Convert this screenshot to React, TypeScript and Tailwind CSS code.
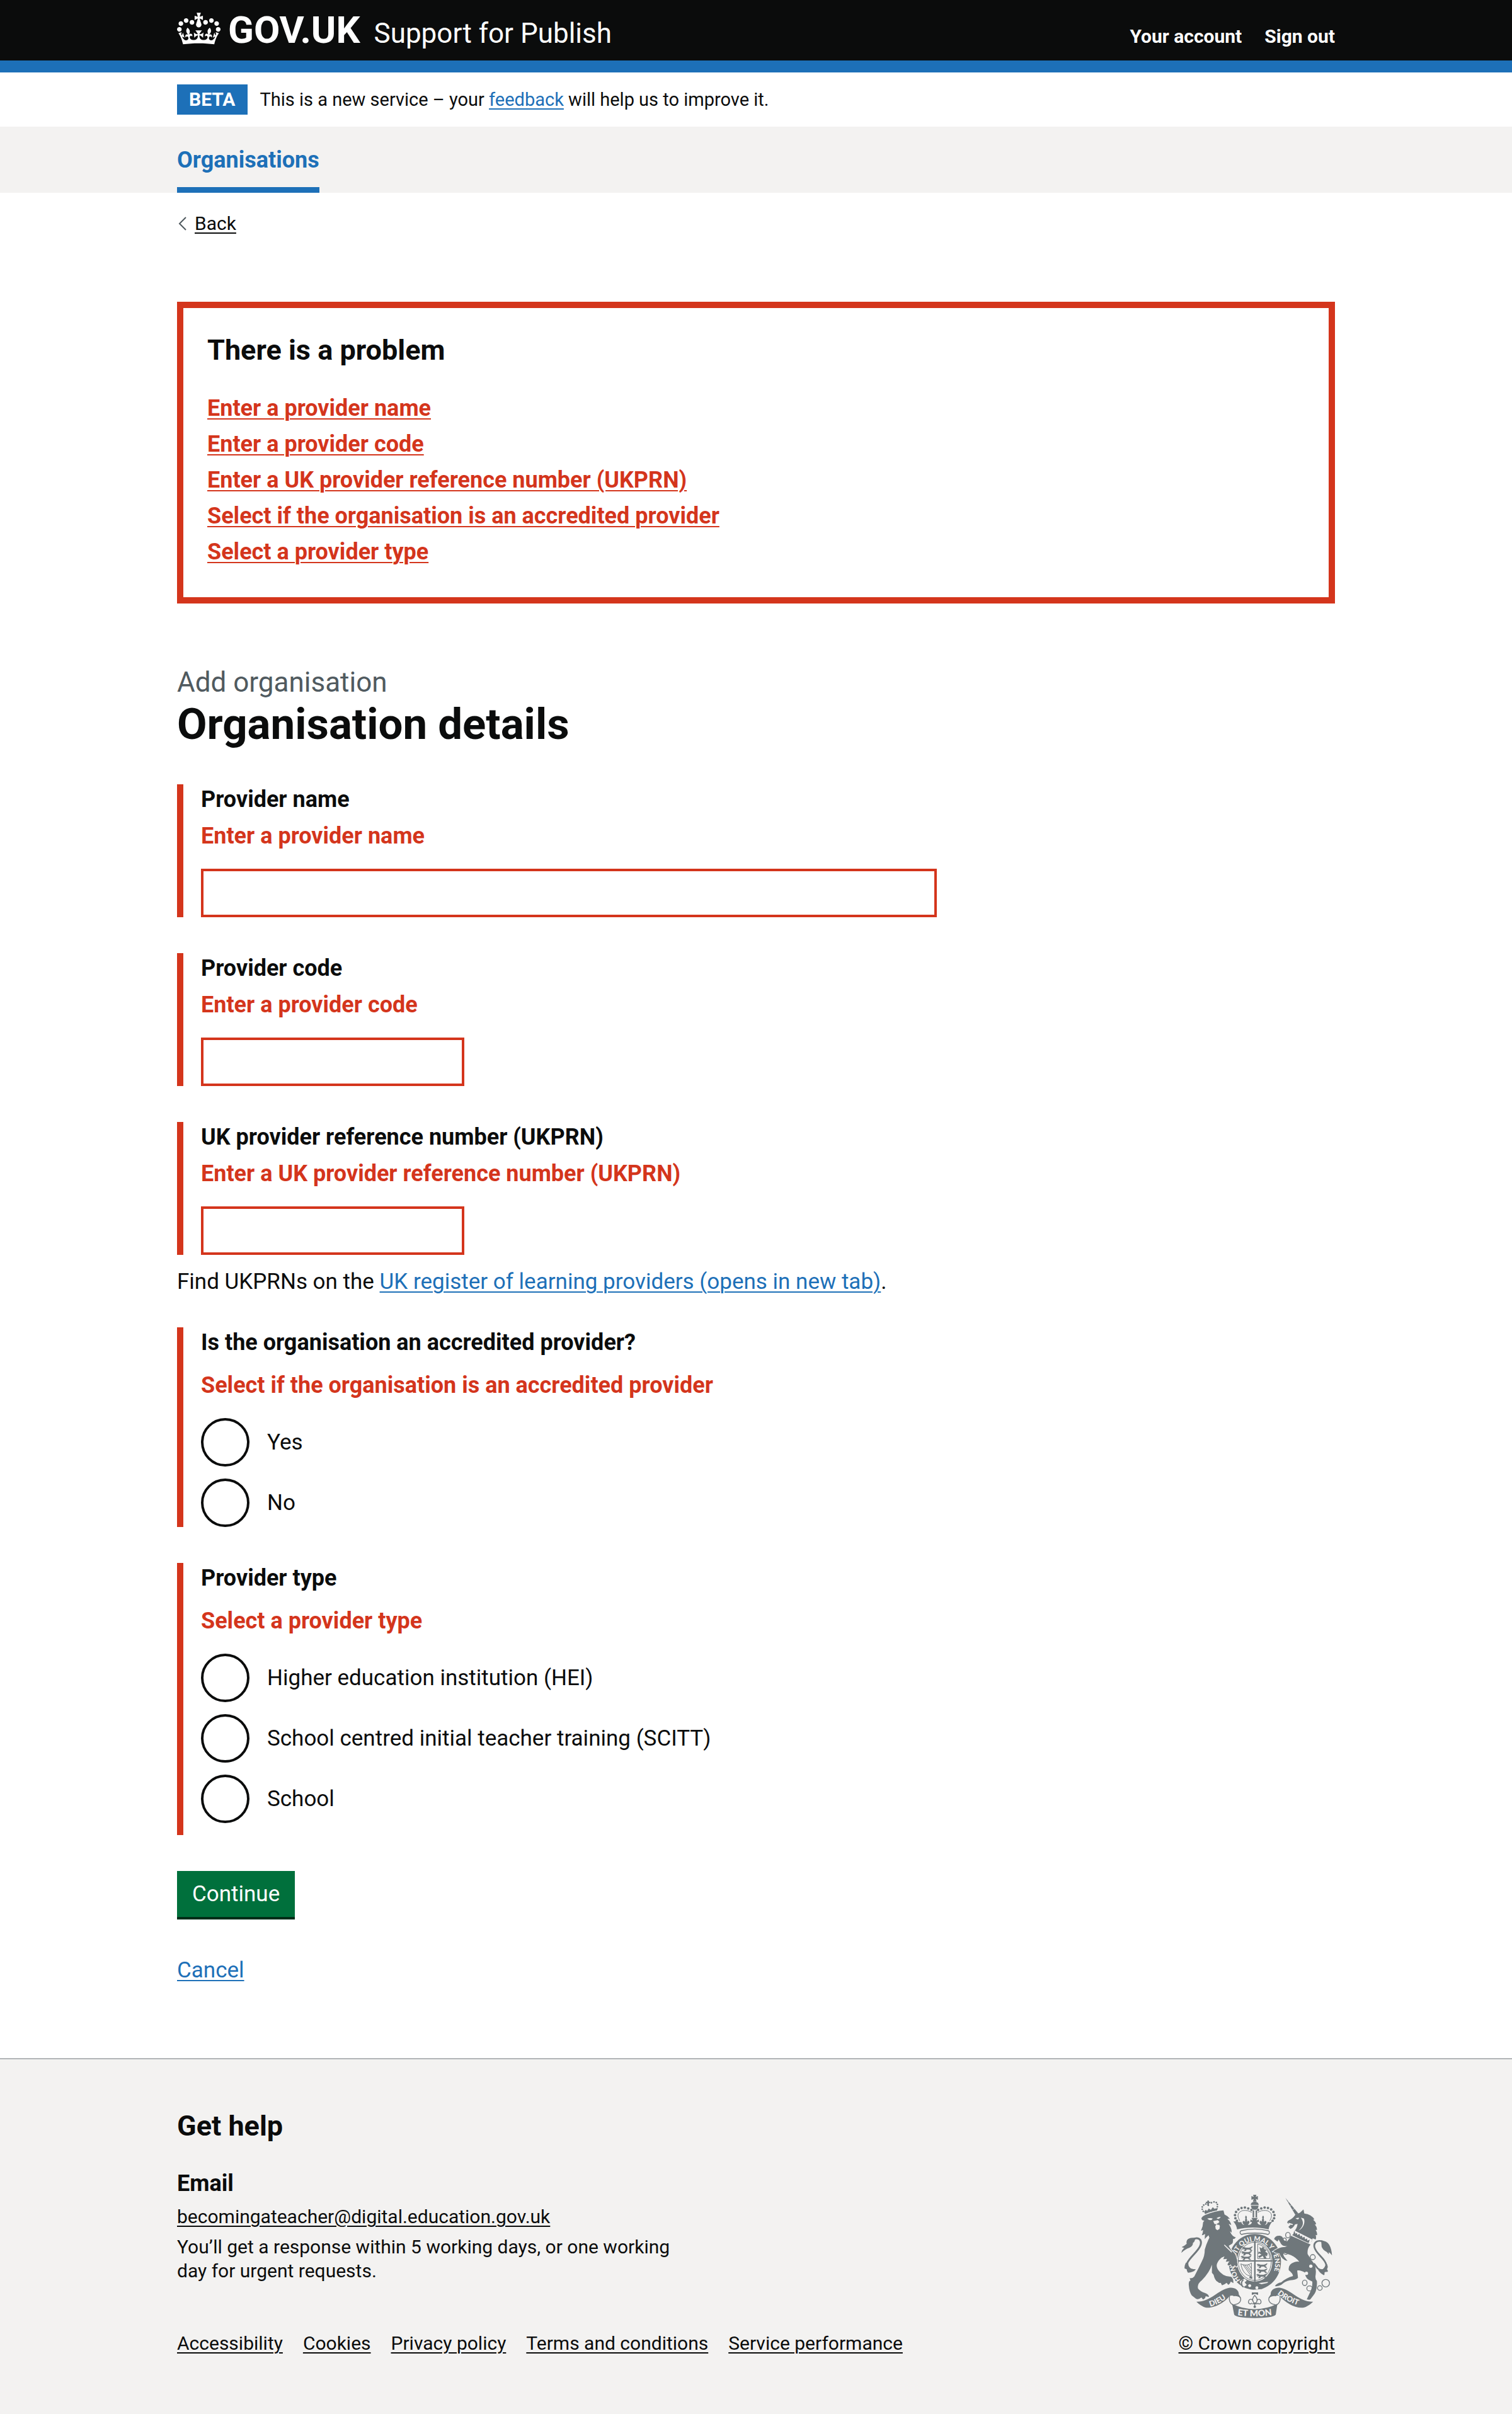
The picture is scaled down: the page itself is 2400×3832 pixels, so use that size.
import type { ReactNode } from "react";

const link = "underline decoration-2 underline-offset-4 hover:decoration-4";

function Container({ children, className = "" }: { children: ReactNode; className?: string }) {
  return <div className={`mx-auto w-full max-w-[1838px] ${className}`}>{children}</div>;
}

function Crown() {
  return (
    <svg viewBox="0 0 132 97" className="mt-0.5 h-[51px] w-[69px] self-start" fill="currentColor" aria-hidden="true">
      <path d="M25 30.2c3.5 1.5 7.7-.2 9.1-3.7 1.5-3.6-.2-7.8-3.9-9.2-3.6-1.4-7.6.3-9.1 3.9-1.4 3.5.3 7.5 3.9 9zM9 39.5c3.6 1.5 7.8-.2 9.2-3.7 1.5-3.6-.2-7.8-3.9-9.1-3.6-1.5-7.6.2-9.1 3.8-1.4 3.5.3 7.5 3.8 9zM4.4 57.2c3.5 1.5 7.7-.2 9.1-3.8 1.5-3.6-.2-7.7-3.9-9.1-3.5-1.5-7.6.3-9.1 3.8-1.4 3.5.3 7.6 3.9 9.1zm38.3-21.4c3.5 1.5 7.7-.2 9.1-3.8 1.5-3.6-.2-7.7-3.9-9.1-3.6-1.5-7.6.3-9.1 3.8-1.3 3.6.4 7.7 3.9 9.1zm64.4-5.6c-3.6 1.5-7.8-.2-9.1-3.7-1.5-3.6.2-7.8 3.8-9.2 3.6-1.4 7.7.3 9.2 3.9 1.3 3.5-.4 7.5-3.9 9zm15.9 9.3c-3.6 1.5-7.7-.2-9.1-3.7-1.5-3.6.2-7.8 3.7-9.1 3.6-1.5 7.7.2 9.2 3.8 1.5 3.5-.3 7.5-3.8 9zm4.7 17.7c-3.6 1.5-7.8-.2-9.2-3.8-1.5-3.6.2-7.7 3.9-9.1 3.6-1.5 7.7.3 9.2 3.8 1.3 3.5-.4 7.6-3.9 9.1zM89.3 35.8c-3.6 1.5-7.8-.2-9.2-3.8-1.4-3.6.2-7.7 3.9-9.1 3.6-1.5 7.7.3 9.2 3.8 1.4 3.6-.3 7.7-3.9 9.1zM69.7 17.7l8.9 4.7V9.3l-8.9 2.8c-.2-.3-.5-.6-.9-.9L72.4 0H59.6l3.5 11.2c-.3.3-.6.5-.9.9l-8.8-2.8v13.1l8.8-4.7c.3.3.6.7.9.9l-5 15.4v.1c-.2.8-.4 1.6-.4 2.4 0 4.1 3.1 7.5 7 8.1h.2c.3 0 .7.1 1 .1.4 0 .7 0 1-.1h.2c4-.6 7.1-4.1 7.1-8.1 0-.8-.1-1.7-.4-2.4V34l-5.1-15.4c.4-.2.7-.6 1-.9zM66 92.8c16.9 0 32.8 1.1 47.1 3.2 4-16.9 8.9-26.7 14-33.5l-9.6-3.4c1 4.9 1.1 7.2 0 10.2-1.5-1.4-3-4.3-4.2-8.7L108.6 76c2.8-2 5-3.2 7.5-3.3-4.4 9.4-10 11.9-13.6 11.2-4.3-.8-6.3-4.6-5.6-7.9 1-4.7 5.7-5.9 8-.5 4.3-8.7-3-11.4-7.6-8.8 7.1-7.2 7.9-13.5 2.1-21.1-8 6.1-8.1 12.3-4.5 20.8-4.7-5.4-12.1-2.5-9.5 6.2 3.4-5.2 7.9-2 7.2 3.1-.6 4.3-6.4 7.8-13.5 7.2-10.3-.9-10.9-8-11.2-13.8 2.5-.5 7.1 1.8 11 7.3L80.2 60c-4.1 4.4-8 5.3-12.3 5.4 1.4-4.4 8-11.6 8-11.6H55.5s6.4 7.2 7.9 11.6c-4.2-.1-8-1-12.3-5.4l1.4 16.4c3.9-5.5 8.5-7.7 10.9-7.3-.3 5.8-.9 12.8-11.1 13.8-7.2.6-12.9-2.9-13.5-7.2-.7-5 3.8-8.3 7.1-3.1 2.7-8.7-4.6-11.6-9.4-6.2 3.7-8.5 3.6-14.7-4.6-20.8-5.8 7.6-5 13.9 2.2 21.1-4.7-2.6-11.9.1-7.7 8.8 2.3-5.5 7.1-4.2 8.1.5.7 3.3-1.3 7.1-5.7 7.9-3.5.7-9-1.8-13.5-11.2 2.5.1 4.7 1.3 7.5 3.3l-4.7-15.4c-1.2 4.4-2.7 7.2-4.3 8.7-1.1-3-.9-5.3 0-10.2l-9.5 3.4c5 6.9 9.9 16.7 14 33.5 14.8-2.1 30.8-3.2 47.7-3.2z" />
    </svg>
  );
}

const archBeads = [
  [436, 141], [421, 134], [405, 130], [389, 132], [374, 139], [363, 151], [358, 166], [360, 181], [367, 193],
];
const lionCrownBeads = [
  [207, 148], [202, 138], [202, 127], [209, 118], [219, 113], [231, 119], [246, 107], [258, 103], [269, 106], [274, 115], [274, 126],
];
const chainLinks = [
  [610, 261, 11, 13], [594, 284, 8, 9], [600, 341, 11, 12], [690, 488, 11, 13], [713, 515, 13, 12], [762, 513, 11, 11], [790, 490, 18, 18],
];

/* A small walking lion, used in the quarters of the shield. */
function Passant({ x, y }: { x: number; y: number }) {
  return (
    <path
      transform={`translate(${x} ${y})`}
      d="M0 3l6-3 6 2 6 2h16l8-3 7-4-3 7-6 3 2 6 6 3-8 1-5-6H21l-4 7H9l5-6-3-3-8 1 5-4-8-3z"
    />
  );
}

function RoyalArms() {
  return (
    <svg viewBox="102 66 720 594" className="h-[198px] w-[240px] text-[#6f777b]" fill="currentColor" aria-hidden="true">
      <defs>
        <path id="garter" d="M384 476A96 110 0 1 1 536 454" />
        <path id="ribbon-left" d="M240 601Q290 588 334 548" />
        <path id="ribbon-right" d="M559 541Q606 582 680 602" />
        <path id="ribbon-mid" d="M370 643Q452 654 546 641" />
      </defs>

      {/* Imperial crown */}
      <path d="M444 69h16l-3 10 10-4v18l-10-4 4 12h-18l4-12-11 4V75l11 4z" />
      <path d="M452 102c12 0 19 7 19 16h-38c0-9 7-16 19-16zM434 121h36c0 10-6 17-11 19h-14c-5-2-11-9-11-19z" />
      <path d="M442 143h7v34h-7zM456 143h7v34h-7z" />
      {archBeads.map(([x, y]) => (
        <g key={x}>
          <circle cx={x} cy={y} r="6" />
          <circle cx={904 - x} cy={y} r="6" />
        </g>
      ))}
      <g fill="none" stroke="currentColor" strokeWidth="3">
        <path d="M438 153c-24-14-54-14-65 8-3 12 2 22 8 32M466 153c24-14 54-14 65 8 3 12-2 22-8 32" />
      </g>
      <path d="M366 196c8 4 16 5 22 2 2 10 7 14 14 14-8-6-10-13-6-18 5-2 9 1 10 5 1-8-2-10 2-16-2-5-3-10 2-15 6 5 5 10 3 15 5 6 2 9 2 16 2-5 6-8 10-5 4 6 1 12-6 18 10 1 16-3 20-12-3-3-6-3-9 0l2-13c4 1 6 3 9 5 0-6-2-9-5-13h31c-4 4-6 7-6 13 3-2 6-4 10-5l2 13c-3-3-6-3-9 0 3 9 9 13 19 12-7-6-10-12-6-18 4-3 8 0 10 5 0-7-3-10 2-16-2-5-3-10 3-15 5 5 4 10 2 15 4 6 1 8 2 16 1-4 5-7 10-5 4 5 2 12-6 18 7 0 12-4 14-14 6 3 14 2 22-2-10 12-16 24-18 38-44-12-108-12-150 0-2-14-8-26-18-38z" />
      <path
        d="M388 240c40-10 88-10 128 0 8 2 8 14 0 18-36-9-92-9-128 0-8-4-8-16 0-18z"
        fill="none" stroke="currentColor" strokeWidth="4"
      />

      {/* Garter and shield */}
      <path fillRule="evenodd" d="M452 256c69 0 125 56 125 132 0 60-36 112-92 130l-40 3c-66-3-117-62-117-133 0-76 56-132 124-132zm0 34c-47 0-84 43-84 96s37 96 84 96 84-43 84-96-37-96-84-96z" />
      <ellipse cx="452" cy="386" rx="79" ry="91" fill="none" stroke="currentColor" strokeWidth="3" />
      <path d="M449 290h7v192h-7zM370 381h166v6H370z" />
      <g stroke="currentColor" strokeWidth="2">
        <Passant x={392} y={318} />
        <Passant x={388} y={339} />
        <Passant x={386} y={361} />
        <Passant x={462} y={399} />
        <Passant x={462} y={423} />
        <Passant x={460} y={447} />
      </g>
      <path fill="none" stroke="currentColor" strokeWidth="3" d="M466 303v70h58c0-30-20-58-58-70z" />
      <path d="M474 318l10 6 8-8 6 12 10 4-6 8 12 8-4 14-8-4 6 14h-12l-6-12-16 10-6-8 16-8-10-6-6 4 2-12 10 2z" />
      <g fill="none" stroke="currentColor" strokeWidth="3">
        <path d="M386 398c16 8 36 8 50-4v62c-24 0-44-20-50-58zM396 402l36 50M404 403l30 40M413 403l22 30M422 400l14 20" />
      </g>
      <path d="M428 456l12 2v12l-14-4z" />
      <g fill="#f3f2f1">
        <circle cx="428" cy="502" r="7" />
        <circle cx="462" cy="512" r="7" />
        <path d="M392 474l12-6 10 10-10 8 10 12-14 10-14-12-6-14zM470 490l10-2 36-4-4 5-28 6z" />
      </g>
      <path d="M398 474c-12 8-12 26 0 34" fill="none" stroke="currentColor" strokeWidth="6" />
      <text className="font-['Lato',sans-serif] font-black" fontSize="32" fill="#f3f2f1">
        <textPath href="#garter">HONI SOIT QUI MAL Y PENSE</textPath>
      </text>

      {/* Lion */}
      {lionCrownBeads.map(([x, y]) => <circle key={`${x}-${y}`} cx={x} cy={y} r="4" />)}
      <path d="M226 97h8v6h7v6h-7v10h-8v-10h-7v-6h7zM211 150l8-10 6 6 8-12 10 7 9-13 8 8 16-4-4 14q-34 2-56 16z" />
      <g stroke="#f3f2f1" strokeWidth="7" strokeLinejoin="round" style={{ paintOrder: "stroke" }}>
        <path d="M198 180Q206 168 218 164Q262 146 303 143L308 163Q324 170 334 184Q326 182 322 184Q338 198 340 214Q332 208 328 208Q344 232 342 250Q338 244 334 244Q344 268 362 272Q356 280 348 280Q350 296 344 302L328 312Q336 330 350 342Q362 352 364 368Q370 380 368 392Q374 402 366 412L356 404Q352 414 342 410L338 400Q330 410 322 402Q326 390 332 386L314 388L320 374L302 376L308 362L294 368C284 376 276 386 272 398Q266 420 290 440Q302 452 316 456L340 460Q352 470 350 490L338 482Q334 494 326 498L318 488Q306 498 296 500L290 488Q282 492 276 484Q262 478 256 450L248 440V402Q236 440 200 476Q176 494 182 516Q196 532 214 536Q234 542 234 556L218 552Q218 562 206 568L198 558Q184 570 172 564L152 548Q140 530 138 500Q136 480 146 478L142 466Q156 468 164 458Q184 420 200 386Q214 362 214 330Q222 300 236 274L232 262Q222 270 214 280Q214 264 216 256Q206 262 200 262Q206 246 206 236Q200 240 196 240Q206 220 206 200L212 192Q198 192 198 180Z" />
      </g>
      <g fill="#f3f2f1">
        <path d="M226 182q14-4 26 0-4 8-12 8-8-1-14-8zM270 180q10-6 20-6-4 8-10 10-6 0-10-4zM254 194l22-4 8 8-6 6 8 14-2 14-10 6-8-6-2-14 6-8-10-2z" />
        <path d="M308 306l36 34-3 4-35-34z" />
      </g>
      <path d="M270 208q8-6 14 0l-6 6z" />
      <path d="M150 284C180 266 202 280 194 308C186 338 140 366 130 396C126 412 134 426 164 428" fill="none" stroke="currentColor" strokeWidth="9" />
      <path d="M168 276Q150 270 134 280Q124 290 128 302Q118 312 104 318Q112 322 116 322Q106 330 102 346Q124 326 140 322Q158 314 158 298Q168 292 168 276ZM124 392Q116 408 118 420L128 424Q128 434 134 440Q158 440 172 424L150 422Q134 410 136 396Z" />

      {/* Unicorn */}
      <path d="M598 84l62 74-14 8z" />
      <g stroke="#f3f2f1" strokeWidth="2"><path d="M608 105l8-4M620 122l9-4M632 140l10-5" /></g>
      <path d="M644 166L668 154L684 139L688 158Q722 162 736 186L730 188Q744 198 744 210L738 210Q750 224 748 236L742 236Q752 252 748 262L742 260Q746 274 742 282L728 276L722 294Q690 270 640 242Q652 232 656 208L644 210Q634 228 622 232L612 222L622 212L608 204Q604 196 616 190Q634 182 644 166Z" />
      <g fill="#f3f2f1">
        <path d="M646 182q10-5 18-3l-6 8zM672 178c14 22 14 40-12 62 22-12 34-36 26-58zM612 202l20 6 2 5-18-2z" />
        <path d="M636 236l90 46-8 20-92-44z" />
      </g>
      <path d="M636 256l4-16 6 14 7-3 2 10 10-6 4 12 8-4 2 10 10-4 3 12 9-4 1 10 12-4-6 18-78-40z" />
      <g stroke="#f3f2f1" strokeWidth="5" strokeLinejoin="round" style={{ paintOrder: "stroke" }}>
        <path d="M624 264L718 306Q700 326 704 352Q720 380 736 398Q746 420 742 450Q738 470 748 480Q750 510 742 530Q738 540 730 550L716 568Q708 570 700 566L714 536Q728 510 726 482Q690 470 692 440Q668 426 654 430L658 464Q650 474 620 476Q596 480 578 498Q564 506 548 504Q556 490 578 486Q600 466 634 456Q634 444 614 428Q610 400 640 390Q652 386 664 388Q650 368 624 356L592 346Q584 350 592 364L608 384Q594 382 584 372Q572 360 570 348L552 346L540 338Q572 316 596 318L608 312Q590 318 578 304Q570 290 566 282L560 292L544 280Q550 262 572 264Q586 268 588 280Q594 292 606 290Q616 282 624 264Z" />
      </g>
      <g fill="#f3f2f1">
        <circle cx="719" cy="409" r="8" />
        <circle cx="698" cy="443" r="8" />
      </g>
      <path d="M776 292C748 282 732 298 736 318C742 350 788 372 792 402C794 424 776 436 752 420L734 396" fill="none" stroke="currentColor" strokeWidth="8" />
      <path d="M768 286Q796 290 806 306Q818 326 820 358Q812 346 804 342Q806 350 804 352Q796 340 786 336Q768 322 770 308ZM794 396Q804 410 796 424Q802 430 800 436Q786 436 784 440Q786 450 782 452Q762 444 752 424Q770 436 784 414Z" />
      <g fill="none" stroke="currentColor" strokeWidth="4">
        {chainLinks.map(([x, y, rx, ry]) => <ellipse key={x} cx={x} cy={y} rx={rx} ry={ry} />)}
        <circle cx="728" cy="366" r="12" fill="#f3f2f1" />
      </g>

      {/* Motto ribbon and fleur-de-lis */}
      <path d="M174 578C240 580 280 520 330 512C352 508 378 520 376 544L388 562Q370 546 350 550Q338 548 332 552C310 580 260 612 218 606Q194 598 174 578Z" />
      <path d="M730 578C664 580 624 520 574 512C552 508 526 520 528 544L516 562Q534 546 554 550Q566 548 572 552C594 580 644 612 686 606Q710 598 730 578Z" />
      <path d="M344 588Q396 614 452 614Q508 614 560 588L552 640Q540 656 452 656Q364 656 354 640Z" />
      <g fill="none" stroke="currentColor" strokeWidth="4">
        <path d="M332 550c-4 24 2 34 16 44M350 550c24-4 40 8 34 24-4 14-20 16-36 20M572 550c4 24-2 34-16 44M554 550c-24-4-40 8-34 24 4 14 20 16 36 20" />
        <path d="M452 548c-14 14-12 26-4 36h10c8-10 8-22-6-36zM446 584c-2-22-22-22-24-6 0 12 12 14 16 6M460 584c2-22 20-22 22-6 0 12-12 14-16 6M440 588h26M452 588v16" />
      </g>
      <circle cx="452" cy="602" r="6" />
      <path d="M438 534h30v12l-15-5-15 5z" />
      <g className="font-['Lato',sans-serif] font-black" fill="#f3f2f1" fontSize="36">
        <text><textPath href="#ribbon-left">DIEU</textPath></text>
        <text><textPath href="#ribbon-right">DROIT</textPath></text>
        <text fontSize="42"><textPath href="#ribbon-mid">ET MON</textPath></text>
      </g>
    </svg>
  );
}

function TextField({ id, label, error, inputClass }: { id: string; label: string; error: string; inputClass: string }) {
  return (
    <div className="mb-[57px] border-l-10 border-[#d4351c] pl-7">
      <label htmlFor={id} className="mb-2.5 block text-[36px]/[48px] font-bold">{label}</label>
      <p id={`${id}-error`} className="mb-7 text-[36px]/[48px] font-bold text-[#d4351c]">{error}</p>
      <input
        id={id}
        type="text"
        aria-describedby={`${id}-error`}
        className={`block h-[77px] border-4 border-[#d4351c] bg-white px-2.5 text-[35px] ${inputClass}`}
      />
    </div>
  );
}

function RadioGroup({ name, legend, error, options, className }: { name: string; legend: string; error: string; options: string[]; className: string }) {
  return (
    <fieldset id={name} className={`border-l-10 border-[#d4351c] pl-7 ${className}`} aria-describedby={`${name}-error`}>
      <legend className="contents"><span className="mb-5 block text-[36px]/[48px] font-bold">{legend}</span></legend>
      <p id={`${name}-error`} className="mb-7 text-[36px]/[48px] font-bold text-[#d4351c]">{error}</p>
      <div className="flex flex-col gap-[19px]">
        {options.map((option) => (
          <label key={option} className="flex items-center gap-7 text-[35px]/[48px]">
            <input type="radio" name={name} className="size-[77px] shrink-0 appearance-none rounded-full border-4 border-[#0b0c0c] bg-white checked:bg-[#0b0c0c] checked:shadow-[inset_0_0_0_16px_white]" />
            {option}
          </label>
        ))}
      </div>
    </fieldset>
  );
}

const errors = [
  ["#provider-name", "Enter a provider name"],
  ["#provider-code", "Enter a provider code"],
  ["#ukprn", "Enter a UK provider reference number (UKPRN)"],
  ["#accredited", "Select if the organisation is an accredited provider"],
  ["#provider-type", "Select a provider type"],
];
const footerLinks = ["Accessibility", "Cookies", "Privacy policy", "Terms and conditions", "Service performance"];

export default function App() {
  return (
    <div className="bg-white font-['Roboto',sans-serif] text-[#0b0c0c]">
      <header className="border-b-19 border-[#1d70b8] bg-[#0b0c0c] text-white">
        <Container className="flex items-baseline justify-between py-[18px]">
          <div className="flex items-baseline gap-[22px]">
            <a href="#" className="flex items-baseline gap-3 text-[60px]/[60px] font-bold"><Crown />GOV.UK</a>
            <a href="#" className="text-[44px]/[48px]">Support for Publish</a>
          </div>
          <nav className="flex gap-9 text-[30px]/[38px] font-bold">
            <a href="#">Your account</a>
            <a href="#">Sign out</a>
          </nav>
        </Container>
      </header>

      <Container className="flex gap-5 py-[19px] text-[29px]/[48px]">
        <strong className="bg-[#1d70b8] px-[19px] text-[30px]/[48px] text-white">BETA</strong>
        <p>This is a new service – your <a href="#" className={`text-[#1d70b8] ${link}`}>feedback</a> will help us to improve it.</p>
      </Container>

      <nav className="bg-[#f3f2f1]">
        <Container className="flex pt-[29px]">
          <a href="#" aria-current="page" className="border-b-9 border-[#1d70b8] pb-[19px] text-[36px]/[48px] font-bold text-[#1d70b8]">Organisations</a>
        </Container>
      </nav>

      <Container className="pt-[30px]">
        <a href="#" className="flex w-fit items-center gap-3 text-[30px]/[38px]">
          <svg viewBox="0 0 14 24" className="ml-0.5 h-6 w-3.5" fill="none" stroke="#505a5f" strokeWidth="2" aria-hidden="true"><path d="M12 2L2 12l10 10" /></svg>
          <span className={link}>Back</span>
        </a>

        <main className="pt-[105px] pb-[115px]">
          <section aria-labelledby="problem" className="mb-24 border-10 border-[#d4351c] px-[38px] pt-[38px] pb-12">
            <h2 id="problem" className="mb-[39px] text-[45px]/[58px] font-bold">There is a problem</h2>
            <ul className="flex flex-col gap-[9px] text-[36px]/[48px] font-bold text-[#d4351c]">
              {errors.map(([href, text]) => (
                <li key={href}><a href={href} className={link}>{text}</a></li>
              ))}
            </ul>
          </section>

          <form className="max-w-[1206px]">
            <h1 className="mb-[57px] text-[69px]/[76px] font-bold">
              <span className="block text-[44px]/[58px] font-normal text-[#505a5f]">Add organisation</span>
              Organisation details
            </h1>

            <TextField id="provider-name" label="Provider name" error="Enter a provider name" inputClass="w-full" />
            <TextField id="provider-code" label="Provider code" error="Enter a provider code" inputClass="w-[418px]" />
            <TextField id="ukprn" label="UK provider reference number (UKPRN)" error="Enter a UK provider reference number (UKPRN)" inputClass="w-[418px]" />

            <p className="-mt-[38px] mb-12 text-[35px]/[48px]">
              Find UKPRNs on the <a href="#" className={`text-[#1d70b8] ${link}`}>UK register of learning providers (opens in new tab)</a>.
            </p>

            <RadioGroup
              name="accredited"
              legend="Is the organisation an accredited provider?"
              error="Select if the organisation is an accredited provider"
              options={["Yes", "No"]}
              className="mb-[57px]"
            />
            <RadioGroup
              name="provider-type"
              legend="Provider type"
              error="Select a provider type"
              options={["Higher education institution (HEI)", "School centred initial teacher training (SCITT)", "School"]}
              className="mb-[57px] pb-[19px]"
            />

            <button type="button" className="mb-[57px] block border-b-4 border-[#002d18] bg-[#00703c] px-6 pt-[13px] pb-3 text-[35px]/[48px] text-white">Continue</button>
            <p className="text-[35px]/[48px]"><a href="#" className={`text-[#1d70b8] ${link}`}>Cancel</a></p>
          </form>
        </main>
      </Container>

      <footer className="border-t-2 border-[#b1b4b6] bg-[#f3f2f1] pt-[77px] pb-[95px] text-[30px]/[38px]">
        <Container className="flex items-end justify-between">
          <div>
            <h2 className="mb-[38px] text-[45px]/[58px] font-bold">Get help</h2>
            <h3 className="mb-2.5 text-[36px]/[48px] font-bold">Email</h3>
            <p className="mb-2.5"><a href="#" className={link}>becomingateacher@digital.education.gov.uk</a></p>
            <p className="mb-[77px] max-w-[800px]">You’ll get a response within 5 working days, or one working day for urgent requests.</p>
            <ul className="flex gap-8">
              {footerLinks.map((text) => (
                <li key={text}><a href="#" className={link}>{text}</a></li>
              ))}
            </ul>
          </div>
          <a href="#" className={`flex flex-col items-center gap-5 ${link}`}>
            <RoyalArms />
            © Crown copyright
          </a>
        </Container>
      </footer>
    </div>
  );
}
